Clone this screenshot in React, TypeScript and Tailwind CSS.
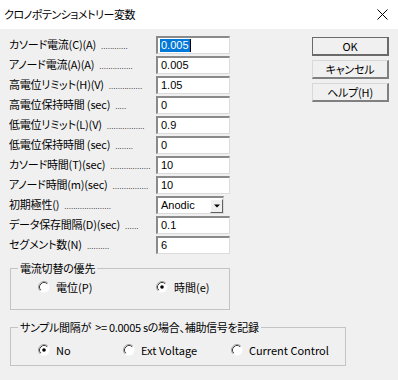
import React from "react";

const jp = "font-['Noto_Sans_CJK_JP','Noto_Sans',sans-serif] [font-feature-settings:'palt']";

const rows: { label: string; dots: number; value: string; combo?: boolean; selected?: boolean }[] = [
  { label: "カソード電流(C)(A)", dots: 12, value: "0.005", selected: true },
  { label: "アノード電流(A)(A)", dots: 15, value: "0.005" },
  { label: "高電位リミット(H)(V)", dots: 15, value: "1.05" },
  { label: "高電位保持時間 (sec)", dots: 5, value: "0" },
  { label: "低電位リミット(L)(V)", dots: 17, value: "0.9" },
  { label: "低電位保持時間 (sec)", dots: 8, value: "0" },
  { label: "カソード時間(T)(sec)", dots: 18, value: "10" },
  { label: "アノード時間(m)(sec)", dots: 16, value: "10" },
  { label: "初期極性()", dots: 21, value: "Anodic", combo: true },
  { label: "データ保存間隔(D)(sec)", dots: 6, value: "0.1" },
  { label: "セグメント数(N)", dots: 10, value: "6" },
];

function Radio({ checked }: { checked?: boolean }) {
  return (
    <svg width="12" height="12" viewBox="0 0 12 12" className="shrink-0">
      <circle cx="6" cy="6" r="5.5" fill="#ffffff" />
      <path d="M2.11 9.89 A5.5 5.5 0 0 1 9.89 2.11" stroke="#a0a0a0" strokeWidth="1" fill="none" />
      <path d="M2.82 9.18 A4.5 4.5 0 0 1 9.18 2.82" stroke="#404040" strokeWidth="1" fill="none" />
      {checked && <circle cx="6" cy="6" r="1.8" fill="#000000" />}
    </svg>
  );
}

function RadioItem({ label, checked, width }: { label: string; checked?: boolean; width: string }) {
  return (
    <div className={`flex items-center gap-[6px] ${width}`}>
      <Radio checked={checked} />
      <span className={`${jp} text-[11px] leading-none text-black`}>{label}</span>
    </div>
  );
}

function Button({ label, def }: { label: string; def?: boolean }) {
  return (
    <div
      className={`w-[77px] h-[19px] flex items-center justify-center bg-[#f0f0f0] ${
        def
          ? "border border-[#6a6a6a] border-b-2 border-r-2"
          : "border border-t-[#d8d8d8] border-l-[#d8d8d8] border-b-2 border-r-2 border-b-[#808080] border-r-[#808080]"
      }`}
    >
      <span className={`${jp} text-[11px] tracking-[-0.2px] leading-none text-black`}>{label}</span>
    </div>
  );
}

export default function App() {
  return (
    <div className="w-[398px] h-[380px] flex flex-col bg-[#f0f0f0] overflow-hidden">
      <div className="h-[29px] bg-white flex items-center pl-[4px] pr-[10px]">
        <span className={`${jp} text-[11px] tracking-[-0.5px] leading-none text-black`}>クロノポテンショメトリー変数</span>
        <svg width="11" height="11" viewBox="0 0 11 11" className="ml-auto">
          <path d="M0.5 0.5 L10.5 10.5 M10.5 0.5 L0.5 10.5" stroke="#000" strokeWidth="1" />
        </svg>
      </div>
      <div className="flex">
        <div className="ml-[9px] mt-[6px] flex flex-col">
          {rows.map((r) => (
            <div key={r.label} className="h-[20px] flex items-center">
              <div className="w-[147px] flex items-baseline gap-[5px] whitespace-nowrap">
                <span className={`${jp} text-[11px] tracking-[-0.2px] leading-none text-black`}>{r.label}</span>
                <span className="font-['Liberation_Sans',sans-serif] text-[8px] leading-none text-black">
                  {".".repeat(r.dots)}
                </span>
              </div>
              {r.combo ? (
                <div className="w-[68px] h-[18px] bg-white border-t-2 border-l-2 border-[#8a8a8a] border-r border-b border-r-[#dcdcdc] border-b-[#dcdcdc] flex items-center">
                  <span className="font-['Liberation_Sans',sans-serif] text-[11px] leading-none pl-[3px] text-black">{r.value}</span>
                  <div className="ml-auto w-[13px] h-[14px] bg-[#f0f0f0] border border-t-[#ffffff] border-l-[#ffffff] border-b-[#606060] border-r-[#606060] flex items-center justify-center">
                    <svg width="6" height="4" viewBox="0 0 6 4">
                      <path d="M0 0.5 L6 0.5 L3 3.5 Z" fill="#000" />
                    </svg>
                  </div>
                </div>
              ) : (
                <div className="w-[74px] h-[18px] bg-white border-t-2 border-l-2 border-[#8a8a8a] border-r border-b border-r-[#dcdcdc] border-b-[#dcdcdc] flex items-center">
                  {r.selected ? (
                    <span className="ml-[2px] flex items-center">
                      <span className="font-['Liberation_Sans',sans-serif] text-[11px] leading-[13px] px-[1px] bg-[#0078d7] text-white">{r.value}</span>
                      <span className="w-[1px] h-[13px] bg-black" />
                    </span>
                  ) : (
                    <span className="font-['Liberation_Sans',sans-serif] text-[11px] leading-none pl-[3px] text-black">{r.value}</span>
                  )}
                </div>
              )}
            </div>
          ))}
        </div>
        <div className="ml-[82px] mt-[8px] flex flex-col gap-[4px]">
          <Button label="OK" def />
          <Button label="キャンセル" />
          <Button label="ヘルプ(H)" />
        </div>
      </div>

      <fieldset className="ml-[10px] mt-[5px] w-[220px] h-[50px] border border-[#c4c4c4] m-0 p-0">
        <legend className={`${jp} ml-[7px] px-[2px] text-[11px] tracking-[-0.2px] leading-[16px] text-black`}>電流切替の優先</legend>
        <div className="h-[22px] flex items-center pl-[27px]">
          <RadioItem label="電位(P)" width="w-[118px]" />
          <RadioItem label="時間(e)" checked width="w-[70px]" />
        </div>
      </fieldset>

      <fieldset className="ml-[10px] mt-[9px] w-[336px] h-[47px] border border-[#c4c4c4] m-0 p-0">
        <legend className={`${jp} ml-[7px] px-[2px] text-[11px] tracking-[-0.3px] leading-[16px] text-black`}>
          サンプル間隔が&nbsp;&nbsp;&gt;= 0.0005 sの場合、補助信号を記録
        </legend>
        <div className="mt-[4px] h-[22px] flex items-center pl-[27px]">
          <RadioItem label="No" checked width="w-[85px]" />
          <RadioItem label="Ext Voltage" width="w-[108px]" />
          <RadioItem label="Current Control" width="w-[110px]" />
        </div>
      </fieldset>
    </div>
  );
}
